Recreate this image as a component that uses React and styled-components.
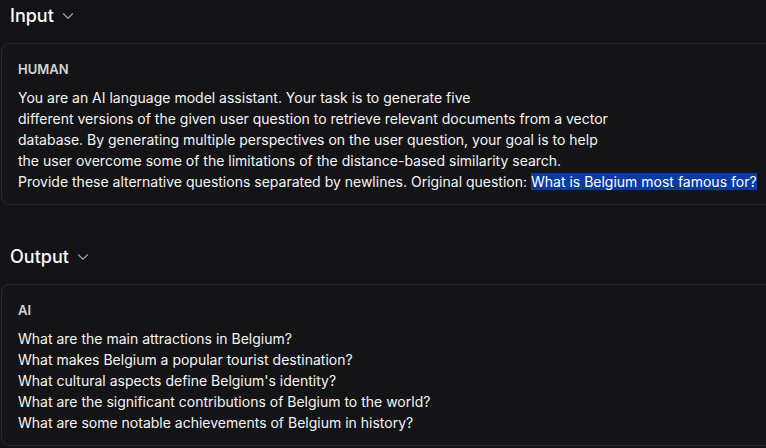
import React from "react";
import styled, { createGlobalStyle } from "styled-components";
import { ChevronDown } from "lucide-react";

const GlobalStyle = createGlobalStyle`
  html, body {
    margin: 0;
    padding: 0;
    background: #131316;
    overflow: hidden;
  }
  body {
    font-family: Inter, "Noto Sans", sans-serif;
    color: #f4f4f5;
  }
`;

const Page = styled.div`
  width: 766px;
  height: 448px;
  overflow: hidden;
`;

const Section = styled.section`
  padding-top: ${(p) => p.$top}px;
`;

const SectionHeader = styled.div`
  display: flex;
  align-items: center;
  gap: 5px;
  padding-left: 10px;
  height: 28px;
  font-size: 18px;
  line-height: 28px;
  font-weight: 500;
  color: #fafafa;
  cursor: pointer;

  svg {
    color: #a1a1aa;
  }
`;

const Card = styled.div`
  margin-top: 13px;
  margin-left: 1px;
  width: 840px;
  border: 1px solid #27272b;
  border-radius: 8px;
  background: #141417;
  padding: 17px 16px 12px 16px;
`;

const Role = styled.div`
  font-size: 13px;
  line-height: 16px;
  font-weight: 600;
  color: #d4d4d8;
  margin-bottom: 10px;
`;

const Message = styled.div`
  font-size: 14px;
  line-height: 21px;
  white-space: pre-wrap;
  color: #f4f4f5;
`;

const Highlight = styled.span`
  background: #0b3aa3;
  color: #ffffff;
`;

const prompt = `You are an AI language model assistant. Your task is to generate five
different versions of the given user question to retrieve relevant documents from a vector
database. By generating multiple perspectives on the user question, your goal is to help
the user overcome some of the limitations of the distance-based similarity search.
Provide these alternative questions separated by newlines. Original question: `;

const answer = `What are the main attractions in Belgium?
What makes Belgium a popular tourist destination?
What cultural aspects define Belgium's identity?
What are the significant contributions of Belgium to the world?
What are some notable achievements of Belgium in history?`;

export default function App() {
  return (
    <Page>
      <GlobalStyle />
      <Section $top={2}>
        <SectionHeader>
          Input <ChevronDown size={18} strokeWidth={1.5} />
        </SectionHeader>
        <Card>
          <Role>HUMAN</Role>
          <Message>
            {prompt}
            <Highlight>What is Belgium most famous for?</Highlight>
          </Message>
        </Card>
      </Section>
      <Section $top={38}>
        <SectionHeader>
          Output <ChevronDown size={18} strokeWidth={1.5} />
        </SectionHeader>
        <Card>
          <Role>AI</Role>
          <Message>{answer}</Message>
        </Card>
      </Section>
    </Page>
  );
}
